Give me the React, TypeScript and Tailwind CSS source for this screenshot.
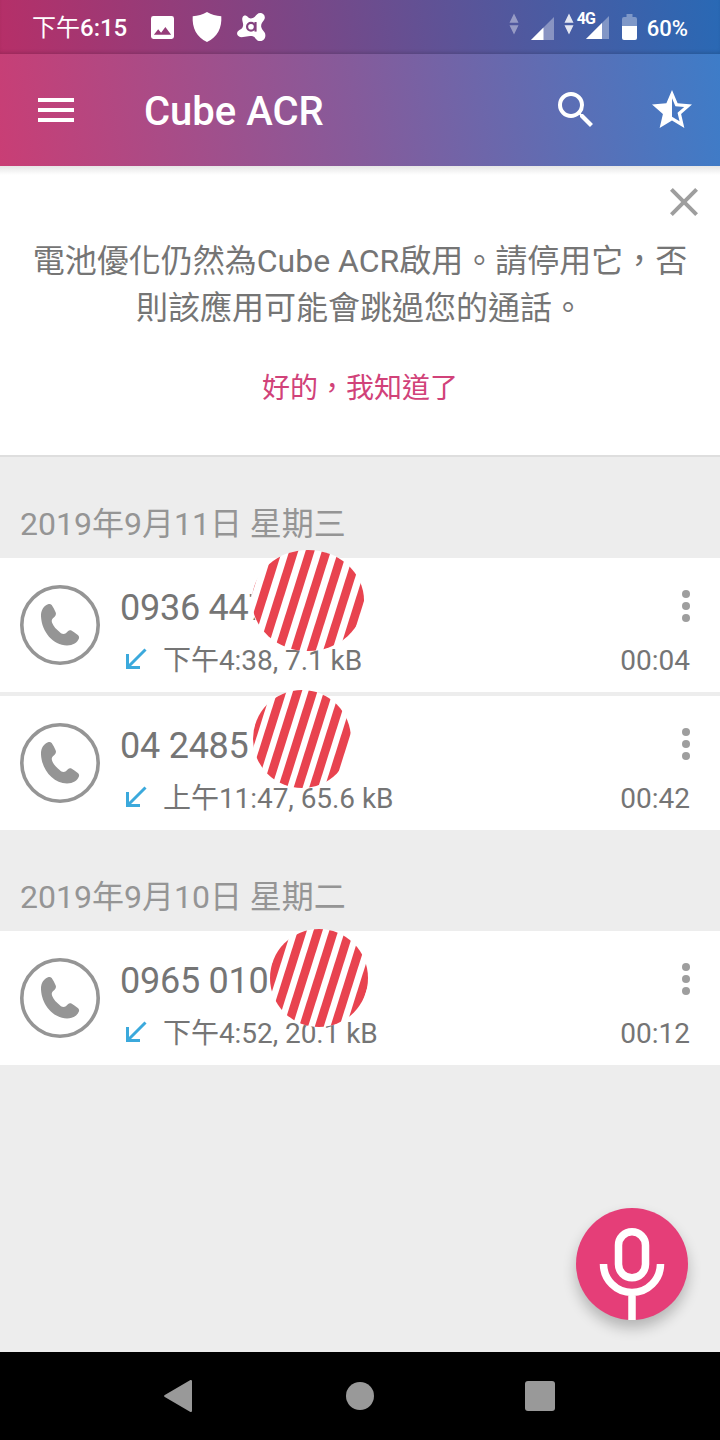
import type { ReactNode } from "react";

type Blob = {
  left: number;
  top: number;
  width: number;
  height: number;
  phase: number;
  period: number;
};

type Call = {
  number: string;
  info: string;
  duration: string;
  blob: Blob;
};

const groups: { date: string; calls: Call[] }[] = [
  {
    date: "2019年9月11日 星期三",
    calls: [
      {
        number: "0936 447",
        info: "下午4:38, 7.1 kB",
        duration: "00:04",
        blob: { left: 252, top: -8, width: 112, height: 101, phase: 5, period: 16.3 },
      },
      {
        number: "04 2485",
        info: "上午11:47, 65.6 kB",
        duration: "00:42",
        blob: { left: 253, top: -6, width: 98, height: 98, phase: 9.4, period: 15.5 },
      },
    ],
  },
  {
    date: "2019年9月10日 星期二",
    calls: [
      {
        number: "0965 010",
        info: "下午4:52, 20.1 kB",
        duration: "00:12",
        blob: { left: 270, top: -2, width: 98, height: 98, phase: 12.7, period: 15.7 },
      },
    ],
  },
];

function MaterialIcon({ children, className }: { children: ReactNode; className?: string }) {
  return (
    <svg viewBox="0 0 24 24" className={`size-12 shrink-0 fill-current ${className ?? ""}`}>
      {children}
    </svg>
  );
}

function DataArrows({ className }: { className: string }) {
  return (
    <svg viewBox="0 0 10 22" className={`h-[22px] w-[10px] shrink-0 fill-white ${className}`}>
      <path d="M5 .5l4.500 9.200h-9zM5 21.500l4.500-9.200h-9z" />
    </svg>
  );
}

function Signal({ split }: { split: number }) {
  return (
    <svg viewBox="0 0 23 23" className="size-[23px] shrink-0 fill-white">
      <path d="M0 23L23 0v23z" opacity="0.35" />
      <path d={`M0 23L${split} ${23 - split}V23z`} />
    </svg>
  );
}

function StatusBar() {
  return (
    <div className="flex h-[54px] items-center bg-[linear-gradient(82deg,#b62f68_0%,#704b8c_49%,#2969b5_100%)] px-8 font-medium text-white shadow-[inset_0_-3px_4px_-2px_rgba(0,0,0,0.18)]">
      <span className="w-[119px] whitespace-nowrap pt-[3px] text-[24px] leading-[51px]">
        <span className="font-normal">下午</span>6:15
      </span>
      <svg viewBox="0 0 24 24" className="size-[23px] fill-white">
        <path
          fillRule="evenodd"
          d="M2.500 0h19A2.500 2.500 0 0 1 24 2.500v19a2.500 2.500 0 0 1-2.500 2.500h-19A2.500 2.500 0 0 1 0 21.500v-19A2.500 2.500 0 0 1 2.500 0zM3 19.500h18l-6-8-4.500 6-3-3.800z"
        />
      </svg>
      <svg viewBox="0 0 30 30" className="ml-[18px] size-[30px] fill-white">
        <path d="M15 0c4.500 2.600 9 3.700 14.300 4.200C30 16 25.500 25 15 30 4.500 25 0 16 .7 4.200 6 3.700 10.500 2.600 15 0z" />
      </svg>
      <svg viewBox="0 0 29 29" className="ml-[15px] size-[29px]">
        <path
          fill="#fff"
          d="M5.500 4.500C6.500 1.800 9.500 2.200 10.800 4c1.600 2 4.700 1.800 7-.3 2-1.800 2.600-3.700 5.400-3.700 3.900 0 5.900 4.200 3.800 7-1.600 2.100-3.200 4-2.800 6.800.3 2.400 2 3.600 3.400 5.800 1.900 3.100.2 8.200-4.200 8.400-4.600.2-4.500-4.200-8.400-4.900-3.900-.6-5.600.7-9 1C1.700 24.500-.7 22 .3 19.200c.9-2.300 4.200-2.500 5.400-5.300C7.200 10.200 4.300 7.800 5.500 4.500z"
        />
        <circle cx="14" cy="13.800" r="3.900" fill="none" stroke="#84427f" strokeWidth="2.200" />
        <path d="M18.500 9v9.600" stroke="#84427f" strokeWidth="2.200" />
      </svg>

      <div className="ml-auto flex items-center">
        <DataArrows className="mb-1.5 opacity-40" />
        <span className="ml-3 mt-[3px] flex">
          <Signal split={12.5} />
        </span>
        <DataArrows className="mb-1.5 ml-2.5 opacity-85" />
        <span className="relative ml-3 mt-px flex">
          <Signal split={16} />
          <span className="absolute -left-[9px] -top-[5px] text-[16px] font-bold leading-[16px] tracking-[-1px]">
            4G
          </span>
        </span>
        <svg viewBox="0 0 15 26" className="ml-[13px] h-[26px] w-[15px]">
          <path d="M4.500 0h6v3H13a2 2 0 0 1 2 2v7H0V5a2 2 0 0 1 2-2h2.500z" fill="#fff" opacity="0.35" />
          <path d="M0 12h15v12a2 2 0 0 1-2 2H2a2 2 0 0 1-2-2z" fill="#fff" />
        </svg>
        <span className="ml-2.5 pt-[3px] text-[22px] leading-[51px]">60%</span>
      </div>
    </div>
  );
}

function Toolbar() {
  return (
    <div className="flex h-28 items-center pl-8 pr-6 text-white">
      <MaterialIcon>
        <path d="M3 18h18v-2H3v2zm0-5h18v-2H3v2zm0-7v2h18V6H3z" />
      </MaterialIcon>
      <h1 className="ml-16 pt-1 text-[40px] font-medium leading-[48px]">Cube ACR</h1>
      <MaterialIcon className="ml-auto">
        <path d="M15.500 14h-.79l-.28-.27A6.471 6.471 0 0 0 16 9.500 6.500 6.500 0 1 0 9.500 16c1.610 0 3.090-.59 4.230-1.570l.27.28v.79l5 4.990L20.490 19l-4.990-5zm-6 0C7.010 14 5 11.990 5 9.500S7.010 5 9.500 5 14 7.010 14 9.500 11.990 14 9.500 14z" />
      </MaterialIcon>
      <MaterialIcon className="ml-12">
        <path d="M22 9.240l-7.190-.62L12 2 9.190 8.630 2 9.240l5.460 4.730L5.820 21 12 17.270 18.180 21l-1.630-7.030L22 9.240zM12 15.400V6.100l1.710 4.040 4.380.38-3.320 2.880 1 4.280L12 15.400z" />
      </MaterialIcon>
    </div>
  );
}

function BatteryNotice() {
  return (
    <section className="flex h-[291px] flex-col border-b-2 border-[#dedede] bg-[linear-gradient(#e6e6e6,#fff_9px)] pt-3 text-center">
      <button className="mr-3 self-end text-[#9e9e9e]">
        <MaterialIcon>
          <path d="M19 6.410L17.590 5 12 10.590 6.410 5 5 6.410 10.590 12 5 17.590 6.410 19 12 13.410 17.590 19 19 17.590 13.410 12z" />
        </MaterialIcon>
      </button>
      <p className="mt-3 whitespace-nowrap text-[32px] leading-[47px] text-[#757575]">
        電池優化仍然為Cube ACR啟用。請停用它，否
        <br />
        則該應用可能會跳過您的通話。
      </p>
      <button className="mt-[33px] self-center text-[28px] leading-[48px] text-[#d14279]">
        好的，我知道了
      </button>
    </section>
  );
}

function StripedBlob({ left, top, width, height, phase, period }: Blob) {
  const id = `blob-${left}`;
  const rx = width / 2;
  const ry = height / 2;
  return (
    <svg
      className="absolute z-10 overflow-visible"
      style={{ left, top, width, height }}
      viewBox={`0 0 ${width} ${height}`}
    >
      <clipPath id={id}>
        <ellipse cx={rx} cy={ry} rx={rx} ry={ry} />
      </clipPath>
      <ellipse cx={rx} cy={ry} rx={rx + 1} ry={ry} fill="#fff" />
      <g clipPath={`url(#${id})`}>
        <g transform={`translate(${phase} 0) skewX(-17.5)`} fill="#e8434f">
          {Array.from({ length: 12 }, (_, i) => (
            <rect key={i} x={(i - 1) * period} width="9" height={height} />
          ))}
        </g>
      </g>
    </svg>
  );
}

function CallRow({ call }: { call: Call }) {
  return (
    <li className="relative flex h-[134px] bg-white pl-5 pr-[30px] text-[#757575]">
      <svg viewBox="0 0 80 80" className="mt-[26.5px] size-20 shrink-0">
        <circle cx="40" cy="40" r="38.200" fill="none" stroke="#959595" strokeWidth="3.600" />
        <path
          fill="#959595"
          d="M28 19.300C23.500 21 20.800 25.500 21 31.500 21.800 47 33 60 47 60.500c6 0 10.500-3 12-7.200.3-1.300-.1-2.300-1.200-3.200-2-1.600-4-3.200-6-4.400-1.500-.8-2.700-.6-3.900.5-1.300 1.500-2.600 2.700-4.500 2.700-1.500 0-2.500-.7-3.500-1.600-3.500-3.100-6.300-5.500-7.700-9.300-.6-1.600-.7-3 .3-4.300 1-1.200 2.200-2 3-3.300.6-1 .6-2 .1-3.100-1.100-2.500-2.300-5-3.900-7.200-1.100-1.300-2.300-1.400-3.700-.8z"
        />
      </svg>
      <div className="ml-5 flex flex-1 flex-col pt-6">
        <div className="text-[36px] leading-[53px] tracking-[-0.25px]">{call.number}</div>
        <div className="flex items-center text-[28px] leading-[52px]">
          <svg
            viewBox="0 0 22 22"
            className="mb-1 ml-[5px] size-[22px] fill-none stroke-[#3ba9dc] stroke-3"
          >
            <path d="M20.500 1.500L3 19M2.500 6v13.500H15" />
          </svg>
          <span className="ml-4 tracking-[-0.06px]">{call.info}</span>
        </div>
      </div>
      <div className="flex flex-col items-end pt-8">
        <svg viewBox="0 0 8 32" className="h-8 w-2 fill-[#9e9e9e]">
          <circle cx="4" cy="4" r="4" />
          <circle cx="4" cy="16" r="4" />
          <circle cx="4" cy="28" r="4" />
        </svg>
        <span className="mt-[13px] text-[28px] leading-[52px]">{call.duration}</span>
      </div>
      <StripedBlob {...call.blob} />
    </li>
  );
}

function NavBar() {
  return (
    <nav className="flex h-22 items-center justify-between bg-black pl-[163px] pr-[165px]">
      <svg viewBox="0 0 30 34" className="h-[34px] w-[30px] fill-[#999]">
        <path d="M27 1.300c1-.6 2 0 2 1v29.400c0 1-1 1.600-2 1L1.800 18c-1-.6-1-1.400 0-2z" />
      </svg>
      <div className="ml-0.5 size-7 rounded-full bg-[#999]" />
      <div className="size-[30px] rounded-[3px] bg-[#999]" />
    </nav>
  );
}

export default function App() {
  return (
    <div
      lang="zh-Hant"
      className="flex h-[1440px] w-[720px] flex-col overflow-hidden bg-[#ededed] font-['Roboto','Noto_Sans_CJK_TC',sans-serif]"
    >
      <header className="bg-[linear-gradient(82deg,#c93e75_0%,#855b9b_49%,#3c7dc9_100%)]">
        <StatusBar />
        <Toolbar />
      </header>
      <BatteryNotice />
      <main className="relative flex-1">
        {groups.map((group) => (
          <section key={group.date}>
            <h2 className="h-[101px] pl-5 pt-[41px] text-[32px] leading-[52px] text-[#959595]">
              {group.date}
            </h2>
            <ul className="flex flex-col gap-1">
              {group.calls.map((call) => (
                <CallRow key={call.number} call={call} />
              ))}
            </ul>
          </section>
        ))}
        <button className="absolute bottom-8 right-8 size-28 rounded-full bg-[#e53e78] shadow-[0_8px_14px_rgba(0,0,0,0.24)]">
          <svg viewBox="0 0 112 112" className="size-28 fill-none stroke-white stroke-[7.5]">
            <rect x="42.500" y="23.800" width="27" height="46" rx="13.500" />
            <path d="M27.500 56a28.500 28.500 0 0 0 57 0M56 84v28" />
          </svg>
        </button>
      </main>
      <NavBar />
    </div>
  );
}
